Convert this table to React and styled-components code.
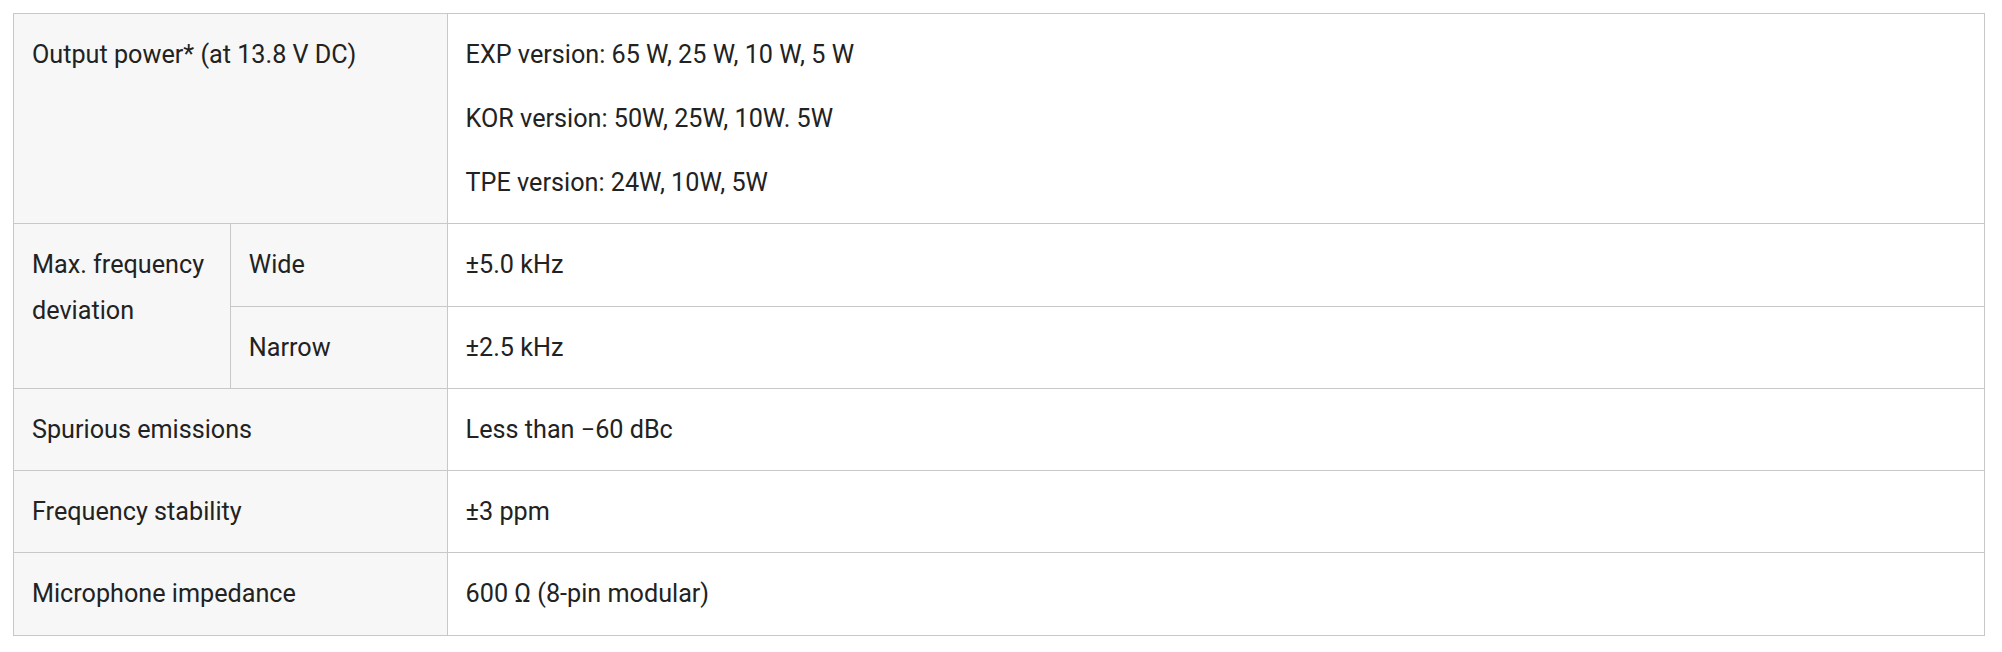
import React from 'react';
import styled, { createGlobalStyle } from 'styled-components';

const GlobalStyle = createGlobalStyle`
  body {
    margin: 0;
    background: #fff;
    font-family: Roboto, "Liberation Sans", Arial, sans-serif;
    color: #222;
  }
`;

const Wrapper = styled.div`
  padding: 13px;
`;

const SpecTable = styled.table`
  width: 1972px;
  border-collapse: collapse;
  table-layout: fixed;
  font-size: 25.2px;
  line-height: 46px;
`;

const Cell = styled.td`
  border: 1px solid #c8c8c8;
  padding: 18px 18px 17.25px 18px;
  vertical-align: top;
  text-align: left;
  background: ${(p) => (p.$label ? '#f7f7f7' : '#fff')};
  color: #222;
`;

const Line = styled.p`
  margin: 0;
  & + & {
    margin-top: 18px;
  }
`;

const rows = [
  { label: 'Spurious emissions', value: 'Less than \u221260 dBc' },
  { label: 'Frequency stability', value: '\u00b13 ppm' },
  { label: 'Microphone impedance', value: '600 \u03a9 (8-pin modular)' },
];

const App = () => {
  return (
    <Wrapper>
      <GlobalStyle />
      <SpecTable>
        <colgroup>
          <col style={{ width: '11%' }} />
          <col style={{ width: '11%' }} />
          <col style={{ width: '78%' }} />
        </colgroup>
        <tbody>
          <tr>
            <Cell $label colSpan={2}>Output power* (at 13.8 V DC)</Cell>
            <Cell>
              <Line>EXP version: 65 W, 25 W, 10 W, 5 W</Line>
              <Line>KOR version: 50W, 25W, 10W. 5W</Line>
              <Line>TPE version: 24W, 10W, 5W</Line>
            </Cell>
          </tr>
          <tr>
            <Cell $label rowSpan={2}>Max. frequency deviation</Cell>
            <Cell $label>Wide</Cell>
            <Cell>±5.0 kHz</Cell>
          </tr>
          <tr>
            <Cell $label>Narrow</Cell>
            <Cell>±2.5 kHz</Cell>
          </tr>
          {rows.map((r) => (
            <tr key={r.label}>
              <Cell $label colSpan={2}>{r.label}</Cell>
              <Cell>{r.value}</Cell>
            </tr>
          ))}
        </tbody>
      </SpecTable>
    </Wrapper>
  );
};

export default App;
